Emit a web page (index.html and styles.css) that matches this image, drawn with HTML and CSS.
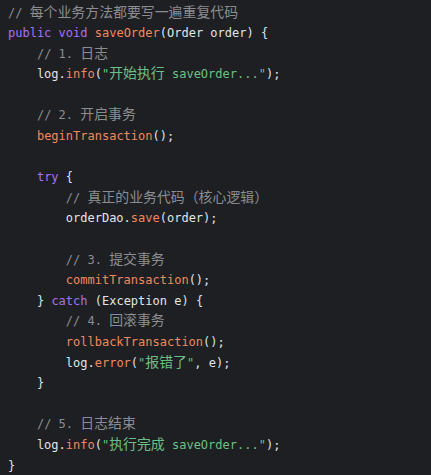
FILE: index.html
```html
<!DOCTYPE html>
<html>
<head>
<meta charset="utf-8">
<link rel="stylesheet" href="styles.css">
</head>
<body>
<div class="code">
<div class="ln"><span class="c">// <span class="z">每个业务方法都要写一遍重复代码</span></span></div>
<div class="ln"><span class="k">public</span> <span class="k">void</span> <span class="f">saveOrder</span><span class="b">(</span>Order order<span class="b">)</span> <span class="b">{</span></div>
<div class="ln">    <span class="c">// 1. <span class="z">日志</span></span></div>
<div class="ln">    log.<span class="f">info</span><span class="b">(</span><span class="s">"<span class="z">开始执行</span> saveOrder..."</span><span class="b">)</span>;</div>
<div class="ln"> </div>
<div class="ln">    <span class="c">// 2. <span class="z">开启事务</span></span></div>
<div class="ln">    <span class="f">beginTransaction</span><span class="b">()</span>;</div>
<div class="ln"> </div>
<div class="ln">    <span class="k">try</span> <span class="b">{</span></div>
<div class="ln">        <span class="c">// <span class="z">真正的业务代码（核心逻辑）</span></span></div>
<div class="ln">        orderDao.<span class="f">save</span><span class="b">(</span>order<span class="b">)</span>;</div>
<div class="ln"> </div>
<div class="ln">        <span class="c">// 3. <span class="z">提交事务</span></span></div>
<div class="ln">        <span class="f">commitTransaction</span><span class="b">()</span>;</div>
<div class="ln">    <span class="b">}</span> <span class="k">catch</span> <span class="b">(</span>Exception e<span class="b">)</span> <span class="b">{</span></div>
<div class="ln">        <span class="c">// 4. <span class="z">回滚事务</span></span></div>
<div class="ln">        <span class="f">rollbackTransaction</span><span class="b">()</span>;</div>
<div class="ln">        log.<span class="f">error</span><span class="b">(</span><span class="s">"<span class="z">报错了</span>"</span>, e<span class="b">)</span>;</div>
<div class="ln">    <span class="b">}</span></div>
<div class="ln"> </div>
<div class="ln">    <span class="c">// 5. <span class="z">日志结束</span></span></div>
<div class="ln">    log.<span class="f">info</span><span class="b">(</span><span class="s">"<span class="z">执行完成</span> saveOrder..."</span><span class="b">)</span>;</div>
<div class="ln"><span class="b">}</span></div>
</div>
</body>
</html>
```
FILE: styles.css
```css
html, body {
  margin: 0;
  padding: 0;
  background: #1e1f22;
}
.code {
  padding: 2.5px 8px 0 8px;
  font-family: "DejaVu Sans Mono", "Liberation Mono", "Noto Sans CJK SC", monospace;
  font-size: 12px;
  color: #e2e4e8;
  height: 475px;
  box-sizing: border-box;
}
.ln {
  white-space: pre;
  height: 20.6px;
  line-height: 20.6px;
}
.z {
  font-family: "Noto Sans CJK SC", sans-serif;
  font-size: 13.9px;
  line-height: 1;
}
.c { color: #8b8d91; }
.k { color: #a572f2; }
.f { color: #ee8a5e; }
.s { color: #6cc086; }
.b { color: #d8e4f2; }
```
